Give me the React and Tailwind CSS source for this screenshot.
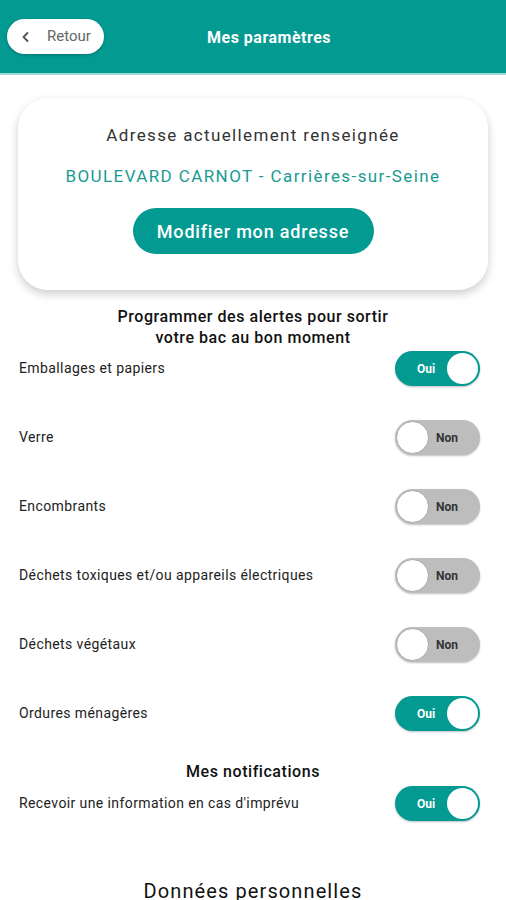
import React from 'react'

const alerts = [
  { label: 'Emballages et papiers', on: true },
  { label: 'Verre', on: false },
  { label: 'Encombrants', on: false },
  { label: 'Déchets toxiques et/ou appareils électriques', on: false },
  { label: 'Déchets végétaux', on: false },
  { label: 'Ordures ménagères', on: true },
]

const Toggle = ({ on }) => {
  if (on) {
    return (
      <div className="w-[85px] h-[35px] rounded-full bg-[#039a92] flex items-center justify-between pl-[22px] pr-[2px] shadow-[0_1px_2px_rgba(0,0,0,0.25)]">
        <span className="text-white text-[12px] font-bold">Oui</span>
        <span className="w-[31px] h-[31px] rounded-full bg-white"></span>
      </div>
    )
  }
  return (
    <div className="w-[85px] h-[35px] rounded-full bg-[#bdbdbd] flex items-center justify-between pl-[1px] pr-[22px] shadow-[0_1px_2px_rgba(0,0,0,0.25)]">
      <span className="w-[33px] h-[33px] rounded-full bg-white border border-[#a8a8a8]"></span>
      <span className="text-[#333] text-[12px] font-bold">Non</span>
    </div>
  )
}

const Row = ({ label, on }) => (
  <div className="flex items-center justify-between pl-[19px] pr-[26px] h-[35px]">
    <span className="text-[14px] text-[#222] tracking-[0.4px]">{label}</span>
    <Toggle on={on} />
  </div>
)

export default function App() {
  return (
    <div className="w-[506px] h-[900px] overflow-hidden bg-white font-['Roboto',sans-serif]">
      <header className="h-[75px] bg-[#039a92] border-b-2 border-[#9fd8d4] flex items-center relative">
        <div className="ml-[7px] w-[97px] h-[35px] bg-white rounded-full flex items-center pl-[14px] gap-[17px] shadow-[0_1px_3px_rgba(0,0,0,0.25)]">
          <svg width="9" height="12" viewBox="0 0 9 12" fill="none">
            <path d="M6.5 2 L2.5 6 L6.5 10" stroke="#555" strokeWidth="1.8" strokeLinecap="round" strokeLinejoin="round" />
          </svg>
          <span className="text-[15px] text-[#666]">Retour</span>
        </div>
        <h1 className="absolute left-[207px] top-[28px] text-white text-[16px] font-bold leading-[20px] tracking-[0.5px]">Mes paramètres</h1>
      </header>

      <main className="pt-[23px]">
        <div className="mx-[18px] h-[192px] bg-white rounded-[30px] shadow-[0_4px_10px_rgba(0,0,0,0.2)] flex flex-col items-center pt-[26px]">
          <p className="text-[17px] text-[#333] leading-[22px] tracking-[1.35px]">Adresse actuellement renseignée</p>
          <p className="mt-[19px] text-[17px] text-[#1a9a92] leading-[22px] tracking-[1.4px]">BOULEVARD CARNOT - Carrières-sur-Seine</p>
          <button className="mt-[21px] w-[241px] h-[46px] rounded-full bg-[#039a92] text-white text-[18px] font-medium tracking-[0.8px]">Modifier mon adresse</button>
        </div>

        <h2 className="mt-[16px] text-center text-[16px] font-medium text-[#111] leading-[21px] tracking-[0.55px]">
          Programmer des alertes pour sortir
          <br />
          votre bac au bon moment
        </h2>

        <div className="mt-[3px] flex flex-col gap-[34px]">
          {alerts.map((a) => (
            <Row key={a.label} label={a.label} on={a.on} />
          ))}
        </div>

        <h2 className="mt-[30px] text-center text-[16px] font-medium text-[#111] leading-[21px] tracking-[0.55px]">Mes notifications</h2>
        <div className="mt-[4px]">
          <Row label="Recevoir une information en cas d'imprévu" on={true} />
        </div>

        <h2 className="mt-[57px] text-center text-[20px] text-[#111] leading-[26px] tracking-[1.1px]">Données personnelles</h2>
      </main>
    </div>
  )
}
